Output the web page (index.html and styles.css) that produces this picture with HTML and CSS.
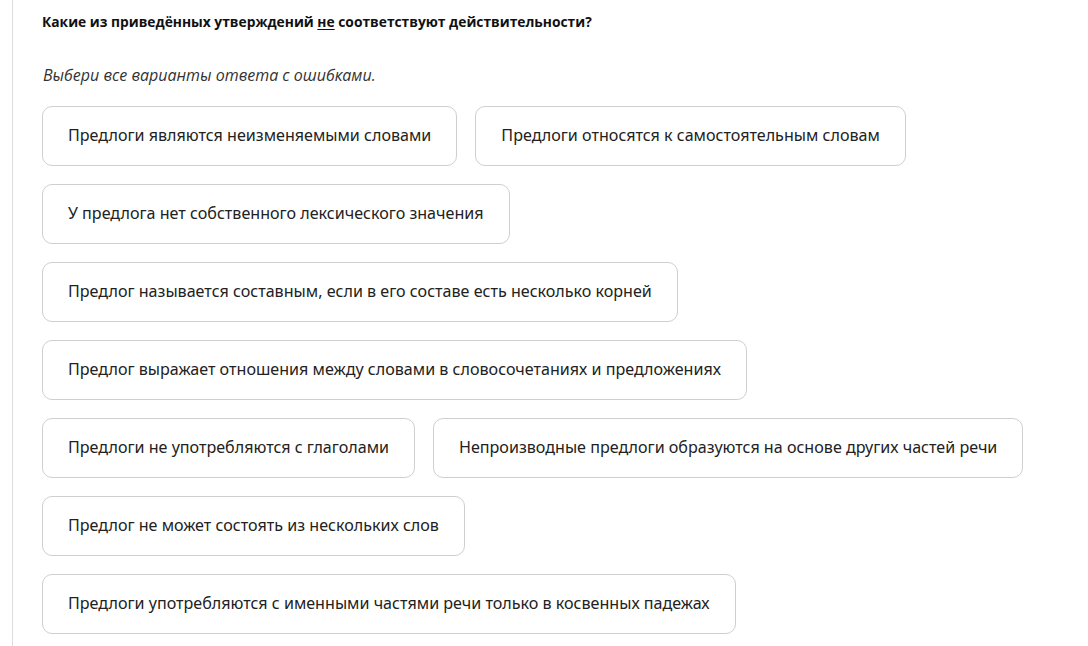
FILE: index.html
```html
<!DOCTYPE html>
<html lang="ru">
<head>
<meta charset="utf-8">
<link rel="stylesheet" href="styles.css">
</head>
<body>
<div class="page">
  <div class="question">
    <h1 class="title">Какие из приведённых утверждений <u>не</u> соответствуют действительности?</h1>
    <p class="hint">Выбери все варианты ответа с ошибками.</p>
    <div class="options">
      <button class="opt">Предлоги являются неизменяемыми словами</button>
      <button class="opt">Предлоги относятся к самостоятельным словам</button>
      <button class="opt">У предлога нет собственного лексического значения</button>
      <button class="opt">Предлог называется составным, если в его составе есть несколько корней</button>
      <button class="opt">Предлог выражает отношения между словами в словосочетаниях и предложениях</button>
      <button class="opt">Предлоги не употребляются с глаголами</button>
      <button class="opt">Непроизводные предлоги образуются на основе других частей речи</button>
      <button class="opt">Предлог не может состоять из нескольких слов</button>
      <button class="opt">Предлоги употребляются с именными частями речи только в косвенных падежах</button>
    </div>
  </div>
</div>
</body>
</html>
```
FILE: styles.css
```css
html, body {
  margin: 0;
  padding: 0;
  background: #fff;
}
.page {
  margin-left: 12px;
  border-left: 1px solid #dcdcdc;
  min-height: 646px;
  box-sizing: border-box;
  padding: 12px 0 0 29px;
}
.title {
  margin: 0;
  font-family: "Open Sans", sans-serif;
  font-weight: 700;
  font-size: 13.8px;
  line-height: 20px;
  color: #111;
}
.title u {
  text-underline-offset: 2px;
}
.hint {
  margin: 32px 0 0 1px;
  font-family: "Open Sans", sans-serif;
  font-style: italic;
  font-size: 16px;
  line-height: 22px;
  color: #333;
}
.options {
  display: flex;
  flex-wrap: wrap;
  gap: 18px;
  margin-top: 20px;
  max-width: 1000px;
}
.opt {
  height: 60px;
  box-sizing: border-box;
  padding: 0 25px 3px;
  border: 1px solid #cfcfcf;
  border-radius: 10px;
  background: #fff;
  font-family: "Noto Sans", sans-serif;
  font-size: 16.1px;
  color: #222;
  cursor: pointer;
}
```
